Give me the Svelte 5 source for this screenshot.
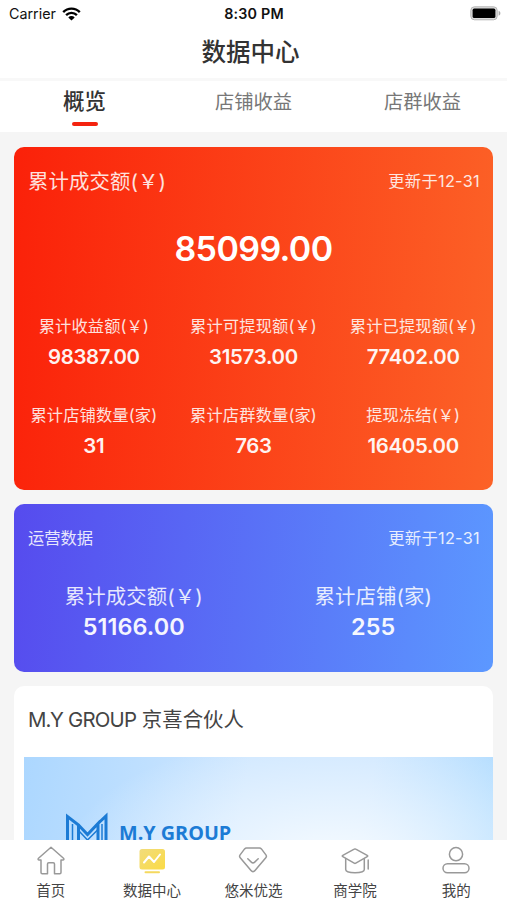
<script lang="ts">
    type Metric = { label: string, value: string }

    let activeTab = $state(0)
    const tabs = ['概览', '店铺收益', '店群收益']

    const earnings: Metric[] = [
        { label: '累计收益额(￥)', value: '98387.00' },
        { label: '累计可提现额(￥)', value: '31573.00' },
        { label: '累计已提现额(￥)', value: '77402.00' },
        { label: '累计店铺数量(家)', value: '31' },
        { label: '累计店群数量(家)', value: '763' },
        { label: '提现冻结(￥)', value: '16405.00' },
    ]

    const operations: Metric[] = [
        { label: '累计成交额(￥)', value: '51166.00' },
        { label: '累计店铺(家)', value: '255' },
    ]
</script>

<div class="app">
    <header>
        <div class="status">
            <div class="carrier">
                <span>Carrier</span>
                <svg width="19" height="14" viewBox="0 0 19 14">
                    <path d="M1.2 5.1a11.7 11.7 0 0 1 16.6 0" />
                    <path d="M4.1 8.1a7.7 7.7 0 0 1 10.8 0" />
                    <path class="dot" d="M9.5 13.6 6.3 10.4a4.6 4.6 0 0 1 6.4 0z" />
                </svg>
            </div>
            <span class="time">8:30 PM</span>
            <svg class="battery" width="31" height="15" viewBox="0 0 31 15">
                <rect x=".8" y=".8" width="26.4" height="13" rx="3.6" />
                <rect class="level" x="2.6" y="2.6" width="22.8" height="9.4" rx="1.6" />
                <path d="M28.6 4.8c2.4 1 2.4 4 0 5z" />
            </svg>
        </div>
        <h1>数据中心</h1>
    </header>

    <nav class="tabs">
        {#each tabs as tab, i}
            <button class:active={activeTab === i} onclick={() => activeTab = i}>
                <span>{tab}</span>
            </button>
        {/each}
    </nav>

    <main>
        <section class="card red">
            <div class="head">
                <span class="name">累计成交额(￥)</span>
                <span class="date">更新于12-31</span>
            </div>
            <div class="total">85099.00</div>
            <div class="metrics three">
                {#each earnings as item}
                    <div class="metric">
                        <span class="label">{item.label}</span>
                        <span class="value">{item.value}</span>
                    </div>
                {/each}
            </div>
        </section>

        <section class="card blue">
            <div class="head">
                <span>运营数据</span>
                <span class="date">更新于12-31</span>
            </div>
            <div class="metrics two">
                {#each operations as item}
                    <div class="metric">
                        <span class="label">{item.label}</span>
                        <span class="value">{item.value}</span>
                    </div>
                {/each}
            </div>
        </section>

        <section class="card partner">
            <h2><span>M.Y GROUP</span> 京喜合伙人</h2>
            <div class="banner">
                <svg width="43" height="44" viewBox="0 0 43 44">
                    <path d="M2.5 46V4.500L13.500 13v33M13.500 13 22.500 22.500 33 11.500V46M33 11.500l8-7.500v42" />
                    <path class="thin" d="M7.500 46V12M37 46V12M14 19l8.500 9 10-10" />
                </svg>
                <span>M.Y GROUP</span>
            </div>
        </section>
    </main>

    <footer>
        <a href="#home">
            <svg width="30" height="30" viewBox="0 0 30 30">
                <path d="M15 2.200 2.500 13.200c-.8.8-.4 1.800.6 1.800H5v12.500c0 .8.400 1.200 1.200 1.200h5.300V19c0-.8.500-1.300 1.300-1.300h4.400c.8 0 1.300.5 1.300 1.300v9.700h5.300c.8 0 1.200-.4 1.200-1.200V15h1.900c1 0 1.400-1 .6-1.800z" />
            </svg>
            <span>首页</span>
        </a>
        <a href="#data">
            <svg width="30" height="30" viewBox="0 0 30 30">
                <defs>
                    <linearGradient id="screen" x1="0" y1="0" x2="1" y2="1">
                        <stop offset="0" stop-color="#f1dc7c" />
                        <stop offset="1" stop-color="#fbdb45" />
                    </linearGradient>
                </defs>
                <rect class="screen" x="2.500" y="4" width="25.500" height="20.500" rx="2.500" />
                <path class="stand" d="M8.500 27.200H22" />
                <path class="line" d="m7 17.500 5-6 5 5.500 6-7.500" />
            </svg>
            <span>数据中心</span>
        </a>
        <a href="#select">
            <svg width="30" height="30" viewBox="0 0 30 30">
                <path d="M8.500 3h13c.8 0 1.400.3 1.900.9l4.500 6c.7 1 .7 2-.1 2.900L17 25.600c-1.200 1.400-2.800 1.400-4 0L2.200 12.800c-.8-.9-.8-1.900-.1-2.900l4.500-6c.5-.6 1.100-.9 1.900-.9z" />
                <path d="m9.800 13.800 3.500 3.300c1.100 1 2.300 1 3.400 0l3.500-3.300" />
            </svg>
            <span>悠米优选</span>
        </a>
        <a href="#school">
            <svg width="30" height="30" viewBox="0 0 30 30">
                <path d="M14.200 4.200 2.800 10.300c-.7.400-.7 1 0 1.400l11.400 6.500c.5.300 1.100.3 1.600 0l11.400-6.500c.7-.4.7-1 0-1.400L15.800 4.200c-.5-.3-1.100-.3-1.600 0z" />
                <path d="M5.700 13.500v11c0 4.200 18.600 4.200 18.600 0v-11M28.200 15v9" />
            </svg>
            <span>商学院</span>
        </a>
        <a href="#me">
            <svg width="30" height="30" viewBox="0 0 30 30">
                <circle cx="15" cy="9.200" r="6.600" />
                <rect x="2" y="18.700" width="26" height="9" rx="4.500" />
            </svg>
            <span>我的</span>
        </a>
    </footer>
</div>

<style>
    :global(body) {
        margin: 0;
        overflow: hidden;
    }

    .app {
        display: flex;
        flex-direction: column;
        height: 100vh;
        background: #f5f5f5;
        color: #333;
        font-family: Inter, "Noto Sans CJK SC", sans-serif;
    }

    header {
        flex: none;
        box-sizing: border-box;
        height: 81px;
        background: #fff;
        border-bottom: 3px solid #f8f8f8;
    }

    .status {
        display: grid;
        grid-template-columns: 1fr auto 1fr;
        align-items: center;
        height: 27px;
        padding: 0 6px 0 9px;
        font-size: 14.3px;
        color: #111;
    }

    .carrier {
        display: flex;
        align-items: center;
        gap: 6px;
    }

    .carrier path {
        fill: none;
        stroke: #000;
        stroke-width: 2.4;
    }

    .carrier .dot {
        fill: #000;
        stroke: none;
    }

    .time {
        font-weight: 600;
        letter-spacing: .2px;
        margin-right: 2px;
    }

    .battery {
        justify-self: end;
        fill: #aaa;
    }

    .battery rect {
        fill: #ddd;
        stroke: #b5b5b5;
    }

    .battery .level {
        fill: #000;
        stroke: none;
    }

    h1 {
        margin: 0;
        padding-right: 6px;
        font-size: 24.5px;
        font-weight: 500;
        line-height: 51px;
        text-align: center;
    }

    .tabs {
        flex: none;
        display: grid;
        grid-template-columns: repeat(3, 1fr);
        height: 51px;
        background: #fff;
    }

    button {
        display: flex;
        flex-direction: column;
        align-items: center;
        padding: 0;
        border: 0;
        background: none;
        font: inherit;
        font-size: 19.3px;
        line-height: 42px;
        color: #777;
    }

    button.active {
        font-size: 21.5px;
        font-weight: 500;
        line-height: 41px;
        color: #333;
    }

    button.active::after {
        content: "";
        width: 26px;
        height: 4px;
        border-radius: 2px;
        background: #f4230f;
    }

    main {
        flex: 1;
        min-height: 0;
        overflow: hidden;
        padding: 15px 14px 0;
    }

    .card {
        margin-bottom: 14px;
        border-radius: 10px;
        overflow: hidden;
        color: #fff;
    }

    .red {
        height: 343px;
        background: linear-gradient(94deg, #fb2109, #fc6227);
    }

    .blue {
        height: 168px;
        background: linear-gradient(96deg, #564bee, #5c98ff);
    }

    .head {
        display: flex;
        justify-content: space-between;
        align-items: center;
        height: 66px;
        padding: 0 13px 0 14px;
        font-size: 16.3px;
        opacity: .86;
    }

    .name {
        margin-top: -1px;
        font-size: 20.4px;
        letter-spacing: .1px;
    }

    .date {
        letter-spacing: .3px;
    }

    .total {
        font-size: 34px;
        font-weight: 600;
        letter-spacing: -.6px;
        line-height: 71px;
        height: 70px;
        text-align: center;
    }

    .metrics {
        display: grid;
        row-gap: 28px;
        text-align: center;
    }

    .three {
        grid-template-columns: repeat(3, 1fr);
        margin-top: 28px;
    }

    .two {
        grid-template-columns: repeat(2, 1fr);
        margin-top: 11px;
    }

    .metric {
        display: flex;
        flex-direction: column;
    }

    .label {
        font-size: 16.3px;
        letter-spacing: .1px;
        line-height: 31px;
        white-space: nowrap;
        opacity: .86;
    }

    .value {
        font-size: 20.4px;
        font-weight: 600;
        letter-spacing: -.3px;
        line-height: 30px;
        opacity: .94;
    }

    .two .label {
        font-size: 20.4px;
    }

    .two .value {
        font-size: 23.4px;
        letter-spacing: .1px;
    }

    .partner {
        height: 260px;
        background: #fff;
        color: #444;
    }

    h2 {
        margin: 0;
        padding-left: 14px;
        font-size: 20.4px;
        font-weight: 400;
        line-height: 67px;
    }

    h2 span {
        letter-spacing: -.8px;
    }

    .banner {
        display: flex;
        align-items: flex-start;
        gap: 11px;
        height: 190px;
        margin: 4px 0 0 10px;
        padding: 55px 0 0 41px;
        box-sizing: border-box;
        background:
            radial-gradient(ellipse 270px 130px at 66% 105px, #f6fbff, rgba(246, 251, 255, .5) 50%, rgba(246, 251, 255, 0)),
            linear-gradient(100deg, #acd7ff, #cfe7ff 45%, #cfe7ff 70%, #b0dcff);
        color: #1c7bd5;
    }

    .banner svg {
        fill: none;
        stroke: #1c7bd5;
        stroke-width: 3;
    }

    .banner .thin {
        stroke-width: 1.5;
    }

    .banner span {
        padding-top: 8px;
        font-family: "Open Sans", sans-serif;
        font-size: 19.8px;
        font-weight: 700;
        line-height: 26px;
    }

    footer {
        flex: none;
        display: grid;
        grid-template-columns: repeat(5, 1fr);
        height: 60px;
        background: #fff;
    }

    footer a {
        display: flex;
        flex-direction: column;
        align-items: center;
        padding-top: 5px;
        font-size: 14.5px;
        line-height: 31px;
        color: #444;
        text-decoration: none;
    }

    footer svg {
        flex: none;
        fill: none;
        stroke: #999;
        stroke-width: 1.5;
        stroke-linecap: round;
        stroke-linejoin: round;
    }

    .screen {
        fill: url(#screen);
        stroke: none;
    }

    .stand {
        stroke: #f5d95f;
        stroke-width: 2;
    }

    .line {
        stroke: #fff;
        stroke-width: 2;
    }
</style>
